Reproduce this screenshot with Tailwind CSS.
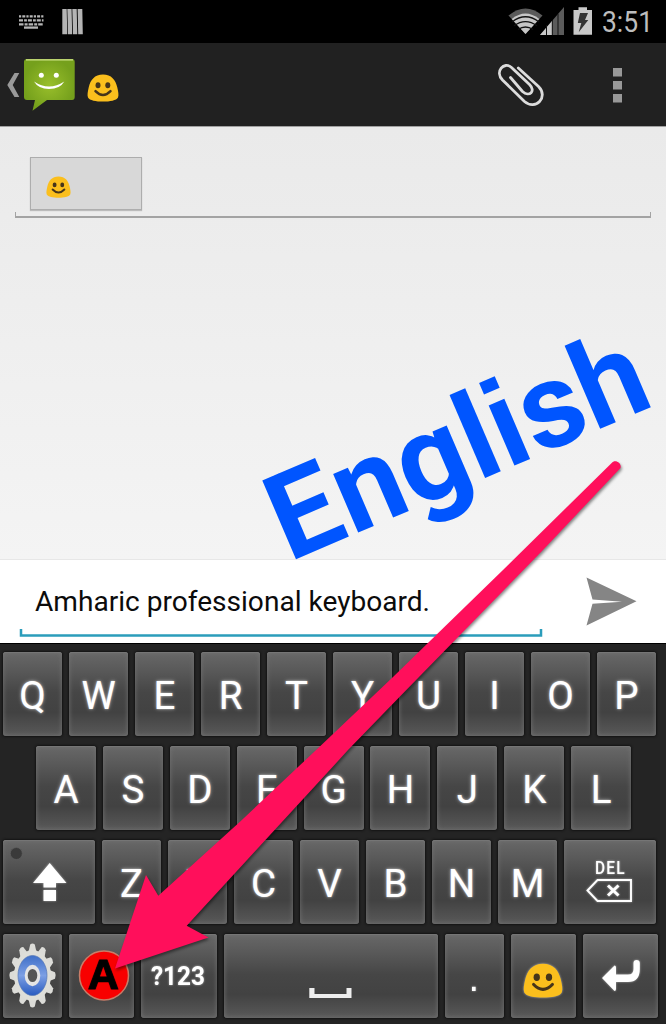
<!DOCTYPE html>
<html lang="en">
<head>
<meta charset="utf-8">
<title>Messaging</title>
<script src="https://cdn.jsdelivr.net/npm/@tailwindcss/browser@4"></script>
<style>
.key{background:linear-gradient(to bottom,#686868 0%,#595959 22%,#464646 48%,#424242 72%,#595959 100%);box-shadow:0 0 2px 1px #141414,inset 0 0 5px #747474,inset 0 1px 0 #777;border-radius:3px;height:84px;display:flex;align-items:center;justify-content:center;flex:none}
.glow{text-shadow:0 0 2px #fff9,0 0 4px #fff6;padding-top:5px}
.glow-svg{filter:drop-shadow(0 0 1px #fff8)}
</style>
</head>
<body class="bg-black">
<svg class="hidden">
  <defs>
    <symbol id="blob" viewBox="0 0 32 28">
      <path d="M16 .5C7.500 .5 3.500 6 1.800 13C.8 17.500 0 21 1 23.500C2.500 26.500 9 27.600 16 27.600S29.500 26.500 31 23.500C32 21 31.200 17.500 30.200 13C28.500 6 24.500 .5 16 .5Z" fill="#fbbf1d"/>
      <ellipse cx="11" cy="11.300" rx="2.500" ry="3" fill="#46351a"/><ellipse cx="20.800" cy="11.300" rx="2.500" ry="3" fill="#46351a"/>
      <path d="M8.500 17.200Q16 25 23.500 17.200" fill="none" stroke="#46351a" stroke-width="2.500" stroke-linecap="round"/>
    </symbol>
  </defs>
</svg>
<div class="relative flex h-[1024px] w-[666px] flex-col overflow-hidden font-[Roboto,sans-serif]">
  <!-- Status bar -->
  <div class="flex h-[43px] shrink-0 bg-black">
    <svg width="666" height="43" viewBox="0 0 666 43">
      <g stroke="#b5b5b5" stroke-width="2.300" fill="none">
        <path d="M19 16.300H43.500" stroke-dasharray="2.200 1.100 3 1.100"/>
        <path d="M19 20.400H43.500" stroke-dasharray="4 1.100 2.800 1"/>
        <path d="M19 24.300H43.500" stroke-dasharray="4.500 1.100 3 1"/>
        <path d="M24 27.600H38"/>
      </g>
      <path d="M62.300 9H66.700L67.300 34.300H62.300ZM67.300 9H71.600L72.200 34.300H68ZM72.300 9H76.700L77.300 34.300H73ZM77.600 9H82.300L82.800 34.300H78.200Z" fill="#b4b4b4"/>
      <path d="M508.500 15.500Q525.500 1.500 542.500 15.500L525.500 34Z" fill="#5a5a5a"/>
      <path d="M511.700 19Q525.500 8 539.300 19L525.500 34Z" fill="#c6c6c6"/>
      <g fill="none" stroke="#111" stroke-width="1.300"><path d="M512 22Q525.500 11.500 539 22"/><path d="M514 25.800Q525.500 17.500 537 25.800"/><path d="M518 29.500Q525.500 24.500 533 29.500"/></g>
      <path d="M540 35L564 7V35Z" fill="#5b5b5b"/>
      <path d="M540 35L552 21V35Z" fill="#c8c8c8"/>
      <path d="M546.500 25V35M552.300 20V35M558 14V35" stroke="#111" stroke-width="1"/>
      <path d="M573.500 10H578.500V7.300H587V10H592V34.700H573.500Z" fill="#c8c8c8"/>
      <path d="M580 13H588L585 20H588.300L578.700 32.300L581.300 23H577.800Z" fill="#333"/>
      <text x="602" y="32.300" font-size="29" fill="#bdbdbd" textLength="51" lengthAdjust="spacingAndGlyphs">3:51</text>
    </svg>
  </div>
  <!-- Action bar -->
  <div class="flex h-[83px] shrink-0 bg-[#212121]">
    <svg width="666" height="83" viewBox="0 43 666 83">
      <defs><radialGradient id="grn"><stop offset="0" stop-color="#99bf2b"/><stop offset="1" stop-color="#75a01c"/></radialGradient></defs>
      <path d="M14.500 73H19.300L12.700 85L19.300 97H14.500L7.300 85Z" fill="#999"/>
      <path d="M27 59H72Q74.700 59 74.700 62V97Q74.700 100 72 100H47L32.500 110.700L35 100H27Q24 100 24 97V62Q24 59 27 59Z" fill="url(#grn)"/>
      <path d="M26 59.800H73" stroke="#d2e58a" stroke-width="1.200"/>
      <circle cx="41.300" cy="75.300" r="2.500" fill="#fff"/><circle cx="56.300" cy="75.300" r="2.500" fill="#fff"/>
      <path d="M34 81.500Q49 91.500 64.300 81.500Q60 89 49 89Q38.500 89 34 81.500Z" fill="#fff"/>
      <use href="#blob" x="87" y="74" width="32" height="28"/>
      <path d="M518.300 68L538.500 86.500C549 97 535.500 111 524.500 101.500L502.500 80C494.500 71.500 504 61 511.500 67.500L529.500 84.500C536 91 529.500 97.500 522.500 91.500L510.500 77.500" fill="none" stroke="#dcdcdc" stroke-width="2.800" stroke-linecap="round" stroke-linejoin="round"/>
      <path d="M613 68h9v8.500h-9zM613 81h9v8.500h-9zM613 94h9v8.500h-9z" fill="#999"/>
    </svg>
  </div>
  <!-- Conversation -->
  <div class="h-[434px] shrink-0 border-t border-[#a0a0a0] border-b border-b-[#e7e7e7] bg-linear-to-b from-[#eaeaea] to-[#f4f4f4] px-[15px] pt-[30px]">
    <div class="ml-[15px] flex h-[53px] w-[112px] items-center border border-[#adadad] bg-[#d8d8d8] pt-[6px] pl-[15px] shadow-[0_1px_1px_#bbb]">
      <svg width="25" height="22"><use href="#blob" width="25" height="22"/></svg>
    </div>
    <div class="mt-[2px] h-[6px] w-[636px] border-x-[1.500px] border-b-2 border-[#a3a3a3]"></div>
  </div>
  <!-- Compose -->
  <div class="flex h-[83px] shrink-0 bg-white">
    <svg width="666" height="83" viewBox="0 560 666 83">
      <text x="35" y="611" font-size="28.500" fill="#0b0b0b" textLength="395" lengthAdjust="spacingAndGlyphs">Amharic professional keyboard.</text>
      <path d="M21 629V635.500H541V629" fill="none" stroke="#2b9dbb" stroke-width="2.500"/>
      <path d="M586.500 577.500L636.500 601.300L586.500 625.500L592.500 603.800L622 601.800L592.500 599.500Z" fill="#858585"/>
    </svg>
  </div>
  <!-- Keyboard -->
  <div class="flex h-[381px] shrink-0 flex-col gap-[10px] border-t border-black bg-[#242424] pt-[8px] pl-[3px] text-[38.500px] leading-none text-white">
    <div class="flex gap-[7px]">
      <div class="key glow w-[59px]">Q</div><div class="key glow w-[59px]">W</div><div class="key glow w-[59px]">E</div><div class="key glow w-[59px]">R</div><div class="key glow w-[59px]">T</div><div class="key glow w-[59px]">Y</div><div class="key glow w-[59px]">U</div><div class="key glow w-[59px]">I</div><div class="key glow w-[59px]">O</div><div class="key glow w-[59px]">P</div>
    </div>
    <div class="flex gap-[6.900px] pl-[33px]">
      <div class="key glow w-[60px]">A</div><div class="key glow w-[60px]">S</div><div class="key glow w-[60px]">D</div><div class="key glow w-[60px]">F</div><div class="key glow w-[60px]">G</div><div class="key glow w-[60px]">H</div><div class="key glow w-[60px]">J</div><div class="key glow w-[60px]">K</div><div class="key glow w-[60px]">L</div>
    </div>
    <div class="flex gap-[7px]">
      <div class="key w-[92px]">
        <svg width="92" height="84" viewBox="3 840 92 84">
          <circle cx="16.300" cy="853.500" r="6" fill="#3a3a3a" stroke="#606060" stroke-width=".7"/>
          <g class="glow-svg" fill="#fff"><path d="M49.700 863L66.500 883H56V887.500H43.500V883H33ZM43.500 890H56V901H43.500Z"/></g>
        </svg>
      </div>
      <div class="key glow w-[59px]">Z</div><div class="key glow w-[59px]">X</div><div class="key glow w-[59px]">C</div><div class="key glow w-[59px]">V</div><div class="key glow w-[59px]">B</div><div class="key glow w-[59px]">N</div><div class="key glow w-[59px]">M</div>
      <div class="key w-[92px]">
        <svg class="glow-svg" width="92" height="84" viewBox="564 840 92 84">
          <text x="595" y="873.500" font-size="18.500" font-weight="500" fill="#fff"><tspan textLength="31" lengthAdjust="spacingAndGlyphs" letter-spacing="1.500">DEL</tspan></text>
          <path d="M587.500 890.500L597.500 880H631V901H597.500Z" fill="none" stroke="#fff" stroke-width="1.900"/>
          <path d="M608 885.500L618.500 895.500M618.500 885.500L608 895.500" stroke="#fff" stroke-width="3"/>
        </svg>
      </div>
    </div>
    <div class="flex gap-[7px]">
      <div class="key w-[59px]">
        <svg width="59" height="84" viewBox="3 934 59 84">
          <defs>
            <linearGradient id="blu" x2="0" y2="1"><stop offset="0" stop-color="#3f6fc8"/><stop offset=".5" stop-color="#7c9fe4"/><stop offset="1" stop-color="#285ac0"/></linearGradient>
            <g id="tooth"><path d="M-4 -17L-2.300 -22.500Q0 -24 2.300 -22.500L4 -17Z"/></g>
          </defs>
          <g transform="translate(32.500 975.500) scale(1 1.380)">
            <g fill="#dcdcd8">
              <use href="#tooth"/><use href="#tooth" transform="rotate(30)"/><use href="#tooth" transform="rotate(60)"/><use href="#tooth" transform="rotate(90)"/><use href="#tooth" transform="rotate(120)"/><use href="#tooth" transform="rotate(150)"/><use href="#tooth" transform="rotate(180)"/><use href="#tooth" transform="rotate(210)"/><use href="#tooth" transform="rotate(240)"/><use href="#tooth" transform="rotate(270)"/><use href="#tooth" transform="rotate(300)"/><use href="#tooth" transform="rotate(330)"/>
            </g>
            <circle r="18.500" fill="#deded9"/>
            <circle r="14.500" fill="url(#blu)" stroke="#5577b5" stroke-width=".6"/>
            <circle r="6.300" fill="#555" stroke="#e4e4e4" stroke-width="3"/>
          </g>
        </svg>
      </div>
      <div class="key w-[65px]">
        <svg width="65" height="84" viewBox="69 934 65 84">
          <circle cx="104" cy="975.500" r="24.500" fill="#f80000" stroke="#c77d69" stroke-width="1.500"/>
          <text x="87.500" y="988.500" font-family="Liberation Sans" font-weight="700" font-size="43" fill="#000" stroke="#000" stroke-width="1.200" textLength="31" lengthAdjust="spacingAndGlyphs">A</text>
        </svg>
      </div>
      <div class="key w-[76px]">
        <svg class="glow-svg" width="76" height="84" viewBox="141 934 76 84"><text x="151" y="985" font-size="25" font-weight="700" fill="#fff" textLength="54" lengthAdjust="spacingAndGlyphs">?123</text></svg>
      </div>
      <div class="key w-[214px]">
        <svg width="214" height="84" viewBox="224 934 214 84"><path d="M309.300 988H314.500V994H346.500V988H351.500V998H309.300Z" fill="#eee"/></svg>
      </div>
      <div class="key w-[59px]">
        <svg class="glow-svg" width="59" height="84" viewBox="445 934 59 84"><text x="468.500" y="990.500" font-family="Liberation Sans" font-size="38" fill="#fff">.</text></svg>
      </div>
      <div class="key w-[65px]">
        <svg width="65" height="84" viewBox="511 934 65 84"><use class="glow-svg" href="#blob" x="523" y="963" width="40" height="35"/></svg>
      </div>
      <div class="key w-[75px]">
        <svg class="glow-svg" width="75" height="84" viewBox="583 934 75 84"><path d="M602 978L614.500 965.500Q616 965.500 616 967.500V974.500H628Q633.500 974.500 633.500 969V963Q633.500 960 636.500 960Q639.800 960 639.800 963V969Q639.800 982 628 982H616V989Q616 991 614.500 991Z" fill="#fff"/></svg>
      </div>
    </div>
  </div>
  <!-- Annotation laid over the screen -->
  <svg class="absolute top-0 left-0" width="666" height="1024" viewBox="0 0 666 1024">
    <text transform="translate(289 562.200) rotate(-23.200)" x="0 69 136.500 206 236.500 270.500 332.500" font-size="120.500" font-weight="700" fill="#0055ff">Engl<tspan font-family="Liberation Sans" font-size="124">i</tspan>sh</text>
    <path style="filter:drop-shadow(1px 2px 1.500px #0007)" d="M611.700 463C615 459 622 463 620.500 468L543 550L399.700 696.700L348 750L333 766.500L186.700 925.700L208.500 937.500L115 968.500L146 875L158.300 895.700L240 821.700L326.700 740L393 677L503 570Z" fill="#ff0f5b"/>
  </svg>
</div>
</body>
</html>
